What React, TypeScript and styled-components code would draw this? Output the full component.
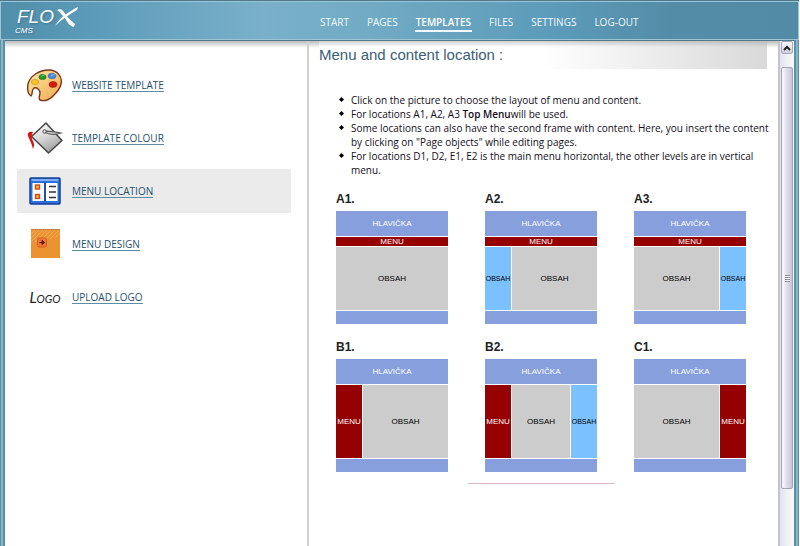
import React from "react";
import styled, { createGlobalStyle } from "styled-components";

const sans = `"Liberation Sans", Arial, sans-serif`;
const humanist = `"Trebuchet MS", "Open Sans", "Noto Sans", sans-serif`;

const GlobalStyle = createGlobalStyle`
  *, *::before, *::after { box-sizing: border-box; }
  body { margin: 0; background: #fff; font-family: ${humanist}; color: #140c18; }
  button { font: inherit; padding: 0; border: 0; background: none; cursor: pointer; }
`;

const Frame = styled.div`
  display: flex;
  flex-direction: column;
  min-height: 100vh;
  margin-right: 1px;
  background: #5790a8;
`;

const Header = styled.header`
  display: flex;
  align-items: flex-start;
  height: 40px;
  border-top: 1px solid #50798b;
  box-shadow: inset 1px 1px 0 #9cc4d2, inset -1px -1px 0 #9cc4d2;
  background: linear-gradient(90deg, #508ea9 0%, #5c9cba 12%, #7ab0c9 33%, #72abc4 45%, #5b9bb9 70%, #538ca7 84%, #528ba6 100%);
`;

const Brand = styled.a`
  display: grid;
  grid-template-columns: auto 26px;
  width: 304px;
  flex: none;
  padding: 6px 0 0 15px;
  justify-content: start;
  color: #fff;
  font-family: ${sans};
  font-style: italic;
  text-decoration: none;
  text-shadow: 1px 1px 2px #3c7690;
`;

const BrandName = styled.span`
  padding-left: 2px;
  font-size: 19px;
  line-height: 20px;
`;

const BrandMark = styled.svg`
  grid-row: 1 / 3;
  grid-column: 2;
  width: 26px;
  height: 22px;
`;

const BrandSub = styled.span`
  font-size: 8px;
  line-height: 8px;
`;

const Nav = styled.nav`
  display: flex;
  gap: 16px;
  padding: 14px 0 0 15px;
`;

const NavLink = styled.a<{ $active?: boolean }>`
  padding: 0 1px;
  color: ${(p) => (p.$active ? "#fff" : "#f0f9fc")};
  font-size: 10px;
  line-height: 15px;
  font-weight: ${(p) => (p.$active ? 600 : 400)};
  text-decoration: none;
  border-bottom: ${(p) => (p.$active ? "2px solid #f2f9fc" : "0")};
  height: ${(p) => (p.$active ? "17px" : "15px")};
`;

const Body = styled.div`
  display: flex;
  flex: 1;
  margin: 0 1px;
  padding: 0 4px;
  background: #5790a8;
  border: solid #8bb5c4;
  border-width: 0 2px;
`;

const Panel = styled.div`
  display: flex;
  flex: 1;
  min-width: 0;
  margin: 0 -2px;
  border-top: 1px solid #50798b;
  background: linear-gradient(#b9bcbd, rgba(255, 255, 255, 0)) top / 100% 7px no-repeat #fff;
`;

const Sidebar = styled.aside`
  width: 304px;
  flex: none;
  padding: 22px 16px 0 12px;
  border-right: 2px solid #d0d0d0;
`;

const SideList = styled.ul`
  display: grid;
  gap: 9px;
  margin: 0;
  padding: 0;
  list-style: none;
`;

const SideItem = styled.li<{ $active?: boolean }>`
  display: grid;
  grid-template-columns: 36px auto;
  gap: 9px;
  align-items: center;
  justify-content: start;
  height: 44px;
  padding-left: 10px;
  background: ${(p) => (p.$active ? "#ebebeb" : "transparent")};
`;

const SideLink = styled.a`
  color: #1f506c;
  font-size: 10px;
  line-height: 12px;
  text-decoration: none;
  border-bottom: 1px solid #5f8ea3;
`;

const Icon = styled.svg`
  width: 36px;
  height: 36px;
`;

const HandLogo = styled.span`
  color: #222;
  font-family: Lato, sans-serif;
  font-size: 15px;
  font-style: italic;
  font-variant: small-caps;
  text-align: center;
`;

const Main = styled.main`
  flex: 1;
  min-width: 0;
  padding: 0 4px 0 10px;
`;

const Title = styled.h1`
  margin: 0 7px 0 0;
  height: 28px;
  color: #3a6076;
  font-family: ${sans};
  font-size: 15px;
  line-height: 28px;
  font-weight: 400;
  background:
    linear-gradient(rgba(150, 150, 150, 0.45), rgba(255, 255, 255, 0)) top / 100% 6px no-repeat,
    linear-gradient(90deg, #fff 50%, #d9d9d9);
`;

const Notes = styled.ul`
  margin: 24px 0 0;
  padding: 0 0 0 20px;
  list-style: none;
  font-size: 10px;
  line-height: 14px;
`;

const Note = styled.li`
  display: grid;
  grid-template-columns: 5px 1fr;
  gap: 7px;
  &::before {
    content: "";
    width: 5px;
    height: 5px;
    margin-top: 4px;
    background: #000;
    clip-path: polygon(50% 0, 100% 50%, 50% 100%, 0 50%);
  }
  b {
    font-weight: 600;
  }
`;

const Gallery = styled.div`
  display: grid;
  grid-template-columns: repeat(3, 112px);
  gap: 16px 37px;
  padding: 15px 0 0 17px;
`;

const Choice = styled.button`
  display: grid;
  gap: 5px;
  color: #222;
  font-family: ${sans};
  text-align: left;
`;

const ChoiceName = styled.span`
  font-size: 12px;
  line-height: 14px;
  font-weight: 700;
`;

const Sketch = styled.span<{ $bar: boolean }>`
  display: grid;
  grid-template-rows: ${(p) => (p.$bar ? "25px 9px 63px 13px" : "25px 73px 13px")};
  gap: 1px;
  font-size: 8px;
  line-height: 9px;
  text-align: center;
`;

const SketchRow = styled.span<{ $columns: string }>`
  display: grid;
  grid-template-columns: ${(p) => p.$columns};
  gap: 1px;
`;

const tones = {
  head: ["#879fdc", "#fff"],
  menu: ["#950000", "#fff"],
  body: ["#ccc", "#000"],
  side: ["#7cc1ff", "#000"],
};

const Block = styled.span<{ $tone: keyof typeof tones }>`
  display: flex;
  align-items: center;
  justify-content: center;
  min-width: 0;
  background: ${(p) => tones[p.$tone][0]};
  color: ${(p) => tones[p.$tone][1]};
  font-size: ${(p) => (p.$tone === "side" ? "7px" : "8px")};
`;

const Rule = styled.hr`
  width: 147px;
  margin: 11px 0 0 149px;
  border: 0;
  border-top: 1px solid #d9bcc6;
`;

const Scrollbar = styled.div`
  display: flex;
  flex-direction: column;
  width: 16px;
  flex: none;
  border-left: 2px solid #c4c4c8;
  background: linear-gradient(90deg, #e4e4ee, #fafafd);
`;

const ScrollUp = styled.button`
  display: grid;
  place-items: center;
  height: 13px;
  margin: 0 1px 13px;
  border: 1px solid #a9a9b8;
  border-radius: 2px;
  background: linear-gradient(#fafafc, #cfcfde);
`;

const Thumb = styled.div`
  display: grid;
  place-items: center;
  flex: 422;
  margin: 0 1px;
  border: 1px solid #a3a3b2;
  border-radius: 2px;
  background: linear-gradient(90deg, #fbfbfd, #e3e3ec 40%, #c5c5d8);
`;

const Track = styled.div`
  flex: 57;
`;

const Grip = styled.span`
  width: 5px;
  height: 7px;
  background: repeating-linear-gradient(#8f8fa2 0 1px, #f5f5fa 1px 2px);
`;

const PaletteIcon = () => (
  <Icon viewBox="0 0 36 36" aria-hidden="true">
    <defs>
      <linearGradient id="wood" x2="1" y2="1">
        <stop stopColor="#ffe9a6" /><stop offset="1" stopColor="#eea84c" />
      </linearGradient>
    </defs>
    <path d="M22 3C12 3 3 9 1 17c-1 6 0 10 3 12 2-1 0-6 3-8 3-1 6 2 6 5 0 3-2 4 0 7 5 2 11-1 14-5 3-3 6-6 7-11C36 10 30 3 22 3Z" fill="url(#wood)" stroke="#7b351c" strokeWidth="1.4" />
    <ellipse cx="8" cy="15" rx="3.7" ry="2.6" fill="#f4c62a" stroke="#c88a18" strokeWidth=".6" />
    <ellipse cx="15.500" cy="10" rx="3.6" ry="2.6" fill="#289526" stroke="#176b18" strokeWidth=".6" />
    <ellipse cx="25" cy="9" rx="4" ry="2.7" fill="#4b8be3" stroke="#2a5fae" strokeWidth=".6" />
    <ellipse cx="26" cy="17.500" rx="4" ry="2.9" fill="#d41c12" stroke="#9c120c" strokeWidth=".6" />
    <path d="M24 8.500l5-2M14 9.500l4-2" stroke="#fff" strokeWidth=".8" opacity=".5" />
  </Icon>
);

const BucketIcon = () => (
  <Icon viewBox="0 0 36 36" aria-hidden="true">
    <defs>
      <linearGradient id="steel" x1=".2" x2=".7" y2="1">
        <stop stopColor="#fff" /><stop offset=".5" stopColor="#d4d4d4" /><stop offset="1" stopColor="#999" />
      </linearGradient>
    </defs>
    <path d="M19 3 4.500 16.500 21.500 33 35 20.500Z" fill="url(#steel)" stroke="#444" strokeWidth="1.500" strokeLinejoin="round" />
    <path d="M6 12C2 11 0 13 1 16c1 3 3 5 5 13 2-4 1-6-1-10-1-3 0-5 1-7Z" fill="#d81612" />
    <path d="M17 11c6 1 10 0 17 2-6 2-13 1-17-1" fill="#e8e8e8" stroke="#555" strokeWidth="1.300" />
    <circle cx="17.500" cy="11.500" r="1.700" fill="#eee" stroke="#444" />
  </Icon>
);

const WindowIcon = () => (
  <Icon viewBox="0 0 36 36" aria-hidden="true">
    <rect x="3" y="5" width="30" height="26" rx="1" fill="#2f70dc" stroke="#153f9d" strokeWidth="1.500" />
    <path d="M4.500 7h27" stroke="#7cb1f5" strokeWidth="2" />
    <path d="M5.500 10H17v18H5.500ZM19 10h11.500v18H19Z" fill="#fff" />
    <path d="M18 9v20" stroke="#123f96" strokeWidth="1.200" />
    <rect x="8.500" y="12" width="4" height="4" fill="#f3b41e" stroke="#cd4a22" strokeWidth="1.400" />
    <rect x="8.500" y="21.500" width="4" height="4" fill="#f3b41e" stroke="#cd4a22" strokeWidth="1.400" />
    <path d="M22 13.500h7M22 19h7M22 24.500h7" stroke="#333" strokeWidth="1.500" />
  </Icon>
);

const DesignIcon = () => (
  <Icon viewBox="0 0 36 36" aria-hidden="true">
    <defs>
      <pattern id="stripes" width="4" height="4" patternUnits="userSpaceOnUse">
        <path d="M-1 5 5-1M-1 1l2-2M3 5l2-2" stroke="#f4b868" strokeWidth="1" />
      </pattern>
    </defs>
    <rect x="4" y="3" width="29" height="29" fill="#ea9330" />
    <path d="M4 3h29v8L4 17Z" fill="url(#stripes)" opacity=".7" />
    <path d="M4 3.500h29" stroke="#cb7a43" />
    <rect x="10.500" y="12" width="9" height="9" rx="1.500" fill="#ee7639" stroke="#d65c28" />
    <path d="M12.500 16.500h2.500M15 14.500l2.500 2-2.500 2Z" fill="#5e160b" stroke="#5e160b" strokeWidth="1" />
  </Icon>
);

const sections = [
  { label: "WEBSITE TEMPLATE", icon: <PaletteIcon /> },
  { label: "TEMPLATE COLOUR", icon: <BucketIcon /> },
  { label: "MENU LOCATION", icon: <WindowIcon />, active: true },
  { label: "MENU DESIGN", icon: <DesignIcon /> },
  { label: "UPLOAD LOGO", icon: <HandLogo aria-hidden="true">Logo</HandLogo> },
];

type Cell = "menu" | "body" | "side";
const cellText = { menu: "MENU", body: "OBSAH", side: "OBSAH" };

const layouts: { name: string; bar: boolean; cells: Cell[] }[] = [
  { name: "A1.", bar: true, cells: ["body"] },
  { name: "A2.", bar: true, cells: ["side", "body"] },
  { name: "A3.", bar: true, cells: ["body", "side"] },
  { name: "B1.", bar: false, cells: ["menu", "body"] },
  { name: "B2.", bar: false, cells: ["menu", "body", "side"] },
  { name: "C1.", bar: false, cells: ["body", "menu"] },
];

export default function App() {
  return (
    <>
      <GlobalStyle />
      <Frame>
        <Header>
          <Brand href="#start">
            <BrandName>FLO</BrandName>
            <BrandMark viewBox="0 0 26 22" aria-hidden="true">
              <path d="M3 3C8 1 9 4 12 8c3 4 6 6 9 9l-1 3c-5-1-7-6-10-10C7 7 6 5 3 3Z" fill="#fff" />
              <path d="M24 0C16 4 6 10 1 19c5-5 13-11 22-16Z" fill="#fff" />
            </BrandMark>
            <BrandSub>CMS</BrandSub>
          </Brand>
          <Nav>
            {["START", "PAGES", "TEMPLATES", "FILES", "SETTINGS", "LOG-OUT"].map((item) => (
              <NavLink key={item} href={`#${item.toLowerCase()}`} $active={item === "TEMPLATES"}>
                {item}
              </NavLink>
            ))}
          </Nav>
        </Header>
        <Body>
          <Panel>
            <Sidebar>
              <SideList>
                {sections.map((s) => (
                  <SideItem key={s.label} $active={s.active}>
                    {s.icon}
                    <SideLink href={`#${s.label.toLowerCase().replace(" ", "-")}`}>{s.label}</SideLink>
                  </SideItem>
                ))}
              </SideList>
            </Sidebar>
            <Main>
              <Title>Menu and content location :</Title>
              <Notes>
                <Note><span>Click on the picture to choose the layout of menu and content.</span></Note>
                <Note><span>For locations A1, A2, A3 <b>Top Menu</b>will be used.</span></Note>
                <Note><span>Some locations can also have the second frame with content. Here, you insert the content by clicking on "Page objects" while editing pages.</span></Note>
                <Note><span>For locations D1, D2, E1, E2 is the main menu horizontal, the other levels are in vertical menu.</span></Note>
              </Notes>
              <Gallery>
                {layouts.map((l) => (
                  <Choice key={l.name} type="button">
                    <ChoiceName>{l.name}</ChoiceName>
                    <Sketch $bar={l.bar}>
                      <Block $tone="head">HLAVIČKA</Block>
                      {l.bar && <Block $tone="menu">MENU</Block>}
                      <SketchRow $columns={l.cells.map((c) => (c === "body" ? "1fr" : "26px")).join(" ")}>
                        {l.cells.map((c, i) => (
                          <Block key={i} $tone={c}>{cellText[c]}</Block>
                        ))}
                      </SketchRow>
                      <Block $tone="head" />
                    </Sketch>
                  </Choice>
                ))}
              </Gallery>
              <Rule />
            </Main>
            <Scrollbar>
              <ScrollUp type="button" aria-label="Scroll up">
                <svg width="8" height="6" viewBox="0 0 8 6" aria-hidden="true">
                  <path d="M1 5l3-3 3 3" fill="none" stroke="#222" strokeWidth="2" />
                </svg>
              </ScrollUp>
              <Thumb><Grip /></Thumb>
              <Track />
            </Scrollbar>
          </Panel>
        </Body>
      </Frame>
    </>
  );
}
